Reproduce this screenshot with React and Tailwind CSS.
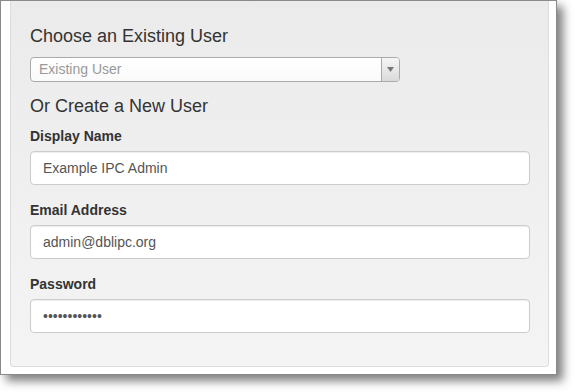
export default function App() {
  const font = { fontFamily: '"Liberation Sans", Arial, sans-serif' };
  return (
    <div className="w-[575px] h-[392px] bg-white" style={font}>
      <div className="w-[557px] h-[375px] border border-[#8a8a8a] bg-white shadow-[6px_6px_9px_rgba(0,0,0,0.5)] pl-[9px] pr-[6px]">
        <div className="w-[539px] h-[366px] border-x border-b border-[#dcdcdc] rounded-b-[4px] bg-gradient-to-b from-[#ebebeb] to-[#f4f4f4] px-[19px] pt-[25px] text-[#333]">
          <div className="text-[18px] leading-[20px]">Choose an Existing User</div>
          <div className="mt-[11px] w-[370px] h-[25px] border border-[#aaa] rounded-[4px] bg-gradient-to-b from-white to-[#fafafa] flex items-stretch">
            <div className="flex-1 pl-[8px] text-[14px] leading-[23px] text-[#999]">Existing User</div>
            <div className="w-[18px] border-l border-[#aaa] rounded-r-[3px] bg-gradient-to-b from-[#f6f6f6] to-[#dadada] flex items-center justify-center">
              <svg width="7" height="5" viewBox="0 0 7 5"><path d="M0 0 H7 L3.5 5 Z" fill="#777" /></svg>
            </div>
          </div>
          <div className="mt-[14px] text-[18px] leading-[20px]">Or Create a New User</div>
          <div className="mt-[10px] flex flex-col gap-[15px]">
            {[
              ["Display Name", "Example IPC Admin"],
              ["Email Address", "admin@dblipc.org"],
              ["Password", "••••••••••••"],
            ].map(([label, value]) => (
              <div key={label}>
                <div className="text-[14px] leading-[20px] font-bold mb-[5px]">{label}</div>
                <div className="h-[34px] w-[500px] border border-[#ccc] rounded-[4px] bg-white shadow-[inset_0_1px_1px_rgba(0,0,0,0.075)] px-[12px] text-[14px] leading-[32px] text-[#555]">
                  {value}
                </div>
              </div>
            ))}
          </div>
        </div>
      </div>
    </div>
  );
}
